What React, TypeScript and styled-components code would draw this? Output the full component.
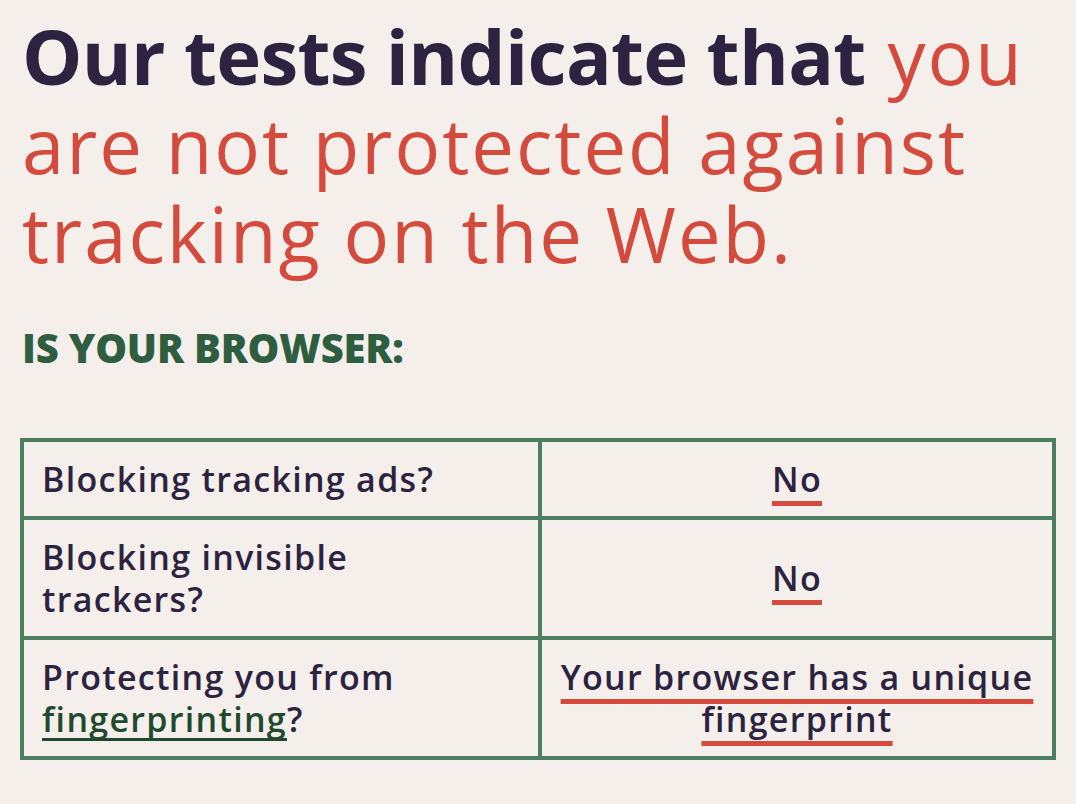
import React from "react";
import styled, { createGlobalStyle } from "styled-components";

const Global = createGlobalStyle`
  html, body { margin: 0; padding: 0; background: #f4efeb; }
  body { font-family: "Open Sans", "Liberation Sans", sans-serif; color: #2c2340; }
`;

const Page = styled.main`
  padding: 11px 20px 40px 20px;
`;

const Headline = styled.h1`
  margin: 0 0 0 2px;
  font-size: 76px;
  line-height: 89px;
  font-weight: 400;
  color: #d44a3c;
  letter-spacing: 2px;
`;

const Strong = styled.span`
  font-weight: 700;
  color: #2c2340;
  letter-spacing: -0.7px;
`;

const SubHead = styled.h2`
  margin: 47px 0 0 2px;
  font-size: 40px;
  line-height: 46px;
  font-weight: 800;
  color: #2e5e3f;
  text-transform: uppercase;
  letter-spacing: -0.2px;
`;

const Table = styled.div`
  margin-top: 67px;
  width: 1036px;
  display: grid;
  grid-template-columns: 514px 510px;
  gap: 4px;
  padding: 4px;
  box-sizing: border-box;
  background: #4b7f5f;
`;

const Cell = styled.div<{ $center?: boolean }>`
  background: #f4efeb;
  padding: ${(p) => (p.$center ? "16px 8px" : "16px 18px")};
  display: flex;
  align-items: center;
  justify-content: ${(p) => (p.$center ? "center" : "flex-start")};
  text-align: ${(p) => (p.$center ? "center" : "left")};
  font-size: 34px;
  line-height: 42px;
  font-weight: 600;
  letter-spacing: 1.3px;
  color: #2c2340;
`;

const Result = styled.span`
  text-decoration: underline;
  text-decoration-color: #d44a3c;
  text-decoration-thickness: 5px;
  text-underline-offset: 9px;
  text-decoration-skip-ink: none;
`;

const Link = styled.a`
  color: #1f4a2e;
  text-decoration: underline;
  text-decoration-color: #1f4a2e;
  text-decoration-thickness: 3px;
  text-underline-offset: 6px;
  text-decoration-skip-ink: none;
`;

export default function App() {
  return (
    <>
      <Global />
      <Page>
        <Headline>
          <Strong>Our tests indicate that</Strong> you are not protected against
          tracking on the Web.
        </Headline>
        <SubHead>Is your browser:</SubHead>
        <Table>
          <Cell>Blocking tracking ads?</Cell>
          <Cell $center>
            <Result>No</Result>
          </Cell>
          <Cell>Blocking invisible trackers?</Cell>
          <Cell $center>
            <Result>No</Result>
          </Cell>
          <Cell>
            <span>
              Protecting you from <Link href="#">fingerprinting</Link>?
            </span>
          </Cell>
          <Cell $center>
            <Result>Your browser has a unique fingerprint</Result>
          </Cell>
        </Table>
      </Page>
    </>
  );
}
